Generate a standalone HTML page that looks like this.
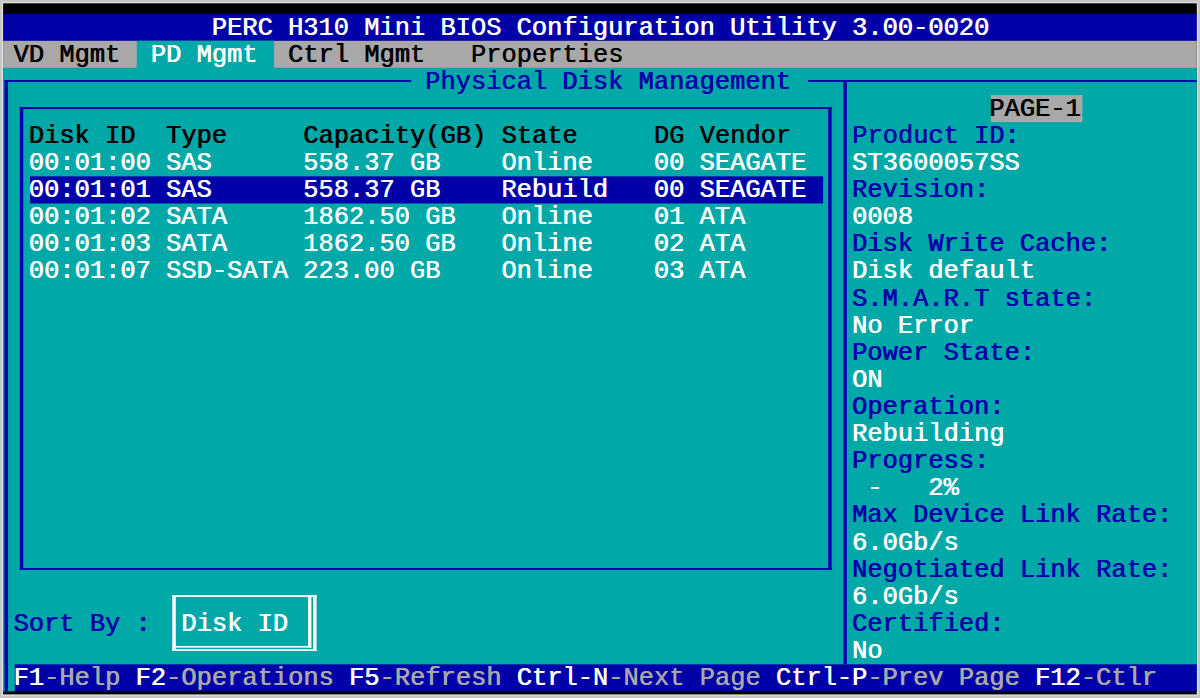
<!DOCTYPE html>
<html><head><meta charset="utf-8"><title>PERC H310 Mini BIOS Configuration Utility</title>
<style>
html,body{margin:0;padding:0}
body{width:1200px;height:698px;background:#c6c6c6;overflow:hidden;position:relative}
#bg{position:absolute;left:0;top:0}
.r{position:absolute;left:-2.00px;height:27.11px;line-height:27.11px;white-space:pre;font-family:"Liberation Mono","DejaVu Sans Mono",monospace;font-size:25.416px;color:#fff;text-shadow:0.7px 0 0 currentColor}
.w{color:#fff}.k{color:#000}.b{color:#0000a8}.g{color:#a8a8a8}
</style></head><body>
<svg id="bg" width="1200" height="698" viewBox="0 0 1200 698">
<defs><clipPath id="scr"><rect x="3.1" y="3.3" width="1193.70" height="691.10"/></clipPath></defs>
<rect x="1.90" y="2.10" width="1196.10" height="693.50" fill="#e4e4e4"/>
<rect x="3.1" y="3.3" width="1193.70" height="691.10" fill="#000"/>
<g clip-path="url(#scr)">
<rect x="-0.50" y="67.92" width="1220.16" height="622.03" fill="#00a8a8"/>
<rect x="-0.50" y="15.20" width="1220.16" height="52.72" fill="#a8a8a8"/>
<rect x="-0.50" y="13.70" width="1220.16" height="27.11" fill="#0000a8"/>
<rect x="136.77" y="40.81" width="137.27" height="28.11" fill="#00a8a8"/>
<rect x="-0.50" y="664.34" width="15.25" height="27.11" fill="#00a8a8"/>
<rect x="14.75" y="664.34" width="1204.91" height="27.11" fill="#0000a8"/>
<rect x="30.00" y="176.36" width="793.10" height="27.11" fill="#0000a8"/>
<rect x="990.88" y="95.03" width="91.51" height="27.11" fill="#a8a8a8"/>
<rect x="4.53" y="80.02" width="3.50" height="611.43" fill="#0000a8"/>
<rect x="4.53" y="80.02" width="406.77" height="1.90" fill="#0000a8"/>
<rect x="807.86" y="80.02" width="411.80" height="1.90" fill="#0000a8"/>
<rect x="843.39" y="80.02" width="3.50" height="584.32" fill="#0000a8"/>
<rect x="19.78" y="107.13" width="3.50" height="462.77" fill="#0000a8"/>
<rect x="828.14" y="107.13" width="3.50" height="462.77" fill="#0000a8"/>
<rect x="19.78" y="107.13" width="811.86" height="1.90" fill="#0000a8"/>
<rect x="19.78" y="568.00" width="811.86" height="1.90" fill="#0000a8"/>
<rect x="172.30" y="595.11" width="3.50" height="55.92" fill="#fff"/>
<rect x="172.30" y="595.11" width="144.24" height="1.90" fill="#fff"/>
<rect x="307.99" y="595.11" width="3.40" height="52.52" fill="#fff"/>
<rect x="313.14" y="595.11" width="3.40" height="55.92" fill="#fff"/>
<rect x="172.30" y="645.93" width="139.09" height="1.70" fill="#fff"/>
<rect x="172.30" y="649.23" width="144.24" height="1.80" fill="#fff"/>
</g>
</svg>
<div class="r" style="top:14.50px">              PERC H310 Mini BIOS Configuration Utility 3.00-0020</div>
<div class="r" style="top:41.61px"> <span class="k">VD Mgmt</span>  PD Mgmt  <span class="k">Ctrl Mgmt</span>   <span class="k">Properties</span></div>
<div class="r" style="top:68.72px">                            <span class="b">Physical Disk Management</span></div>
<div class="r" style="top:95.83px">                                                                 <span class="k">PAGE-1</span></div>
<div class="r" style="top:122.94px">  <span class="k">Disk ID</span>  <span class="k">Type</span>     <span class="k">Capacity(GB)</span> <span class="k">State</span>     <span class="k">DG</span> <span class="k">Vendor</span>    <span class="b">Product ID:</span></div>
<div class="r" style="top:150.05px">  00:01:00 SAS      558.37 GB    Online    00 SEAGATE   ST3600057SS</div>
<div class="r" style="top:177.16px">  00:01:01 SAS      558.37 GB    Rebuild   00 SEAGATE   <span class="b">Revision:</span></div>
<div class="r" style="top:204.27px">  00:01:02 SATA     1862.50 GB   Online    01 ATA       0008</div>
<div class="r" style="top:231.38px">  00:01:03 SATA     1862.50 GB   Online    02 ATA       <span class="b">Disk Write Cache:</span></div>
<div class="r" style="top:258.49px">  00:01:07 SSD-SATA 223.00 GB    Online    03 ATA       Disk default</div>
<div class="r" style="top:285.60px">                                                        <span class="b">S.M.A.R.T state:</span></div>
<div class="r" style="top:312.71px">                                                        No Error</div>
<div class="r" style="top:339.82px">                                                        <span class="b">Power State:</span></div>
<div class="r" style="top:366.93px">                                                        ON</div>
<div class="r" style="top:394.04px">                                                        <span class="b">Operation:</span></div>
<div class="r" style="top:421.15px">                                                        Rebuilding</div>
<div class="r" style="top:448.26px">                                                        <span class="b">Progress:</span></div>
<div class="r" style="top:475.37px">                                                         -   2%</div>
<div class="r" style="top:502.48px">                                                        <span class="b">Max Device Link Rate:</span></div>
<div class="r" style="top:529.59px">                                                        6.0Gb/s</div>
<div class="r" style="top:556.70px">                                                        <span class="b">Negotiated Link Rate:</span></div>
<div class="r" style="top:583.81px">                                                        6.0Gb/s</div>
<div class="r" style="top:610.92px"> <span class="b">Sort By :</span>  Disk ID                                     <span class="b">Certified:</span></div>
<div class="r" style="top:638.03px">                                                        No</div>
<div class="r" style="top:665.14px"> F1<span class="g">-Help</span> F2<span class="g">-Operations</span> F5<span class="g">-Refresh</span> Ctrl-N<span class="g">-Next Page</span> Ctrl-P<span class="g">-Prev Page</span> F12<span class="g">-Ctlr</span></div>
</body></html>
